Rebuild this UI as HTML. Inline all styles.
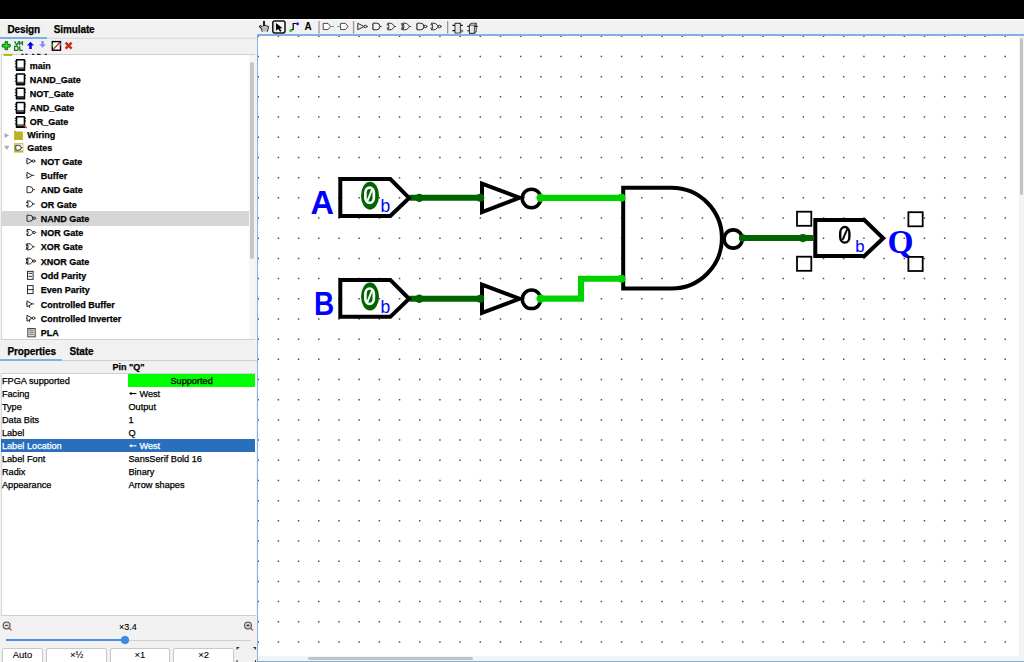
<!DOCTYPE html>
<html><head><meta charset="utf-8"><style>
html,body{margin:0;padding:0;width:1024px;height:662px;overflow:hidden;background:#fff;}
body{position:relative;font-family:"Liberation Sans", sans-serif;}
.r{position:absolute;box-sizing:border-box;}
.t{position:absolute;white-space:nowrap;font-family:"Liberation Sans", sans-serif;-webkit-text-stroke:0.25px currentColor;}
.cv{position:absolute;left:0;top:0;}
</style></head><body>
<svg class="cv" width="1024" height="662" viewBox="0 0 1024 662">
<defs><clipPath id="cc"><rect x="258" y="36" width="766" height="626"/></clipPath></defs>
<rect x="257" y="35" width="767" height="627" fill="#ffffff"/>
<g clip-path="url(#cc)">
<path d="M257.46 35.55h1.5v1.5h-1.5zM257.46 55.74h1.5v1.5h-1.5zM257.46 75.93h1.5v1.5h-1.5zM257.46 96.12h1.5v1.5h-1.5zM257.46 116.31h1.5v1.5h-1.5zM257.46 136.50h1.5v1.5h-1.5zM257.46 156.69h1.5v1.5h-1.5zM257.46 176.88h1.5v1.5h-1.5zM257.46 197.07h1.5v1.5h-1.5zM257.46 217.26h1.5v1.5h-1.5zM257.46 237.45h1.5v1.5h-1.5zM257.46 257.64h1.5v1.5h-1.5zM257.46 277.83h1.5v1.5h-1.5zM257.46 298.02h1.5v1.5h-1.5zM257.46 318.21h1.5v1.5h-1.5zM257.46 338.40h1.5v1.5h-1.5zM257.46 358.59h1.5v1.5h-1.5zM257.46 378.78h1.5v1.5h-1.5zM257.46 398.97h1.5v1.5h-1.5zM257.46 419.16h1.5v1.5h-1.5zM257.46 439.35h1.5v1.5h-1.5zM257.46 459.54h1.5v1.5h-1.5zM257.46 479.73h1.5v1.5h-1.5zM257.46 499.92h1.5v1.5h-1.5zM257.46 520.11h1.5v1.5h-1.5zM257.46 540.30h1.5v1.5h-1.5zM257.46 560.49h1.5v1.5h-1.5zM257.46 580.68h1.5v1.5h-1.5zM257.46 600.87h1.5v1.5h-1.5zM257.46 621.06h1.5v1.5h-1.5zM257.46 641.25h1.5v1.5h-1.5zM277.65 35.55h1.5v1.5h-1.5zM277.65 55.74h1.5v1.5h-1.5zM277.65 75.93h1.5v1.5h-1.5zM277.65 96.12h1.5v1.5h-1.5zM277.65 116.31h1.5v1.5h-1.5zM277.65 136.50h1.5v1.5h-1.5zM277.65 156.69h1.5v1.5h-1.5zM277.65 176.88h1.5v1.5h-1.5zM277.65 197.07h1.5v1.5h-1.5zM277.65 217.26h1.5v1.5h-1.5zM277.65 237.45h1.5v1.5h-1.5zM277.65 257.64h1.5v1.5h-1.5zM277.65 277.83h1.5v1.5h-1.5zM277.65 298.02h1.5v1.5h-1.5zM277.65 318.21h1.5v1.5h-1.5zM277.65 338.40h1.5v1.5h-1.5zM277.65 358.59h1.5v1.5h-1.5zM277.65 378.78h1.5v1.5h-1.5zM277.65 398.97h1.5v1.5h-1.5zM277.65 419.16h1.5v1.5h-1.5zM277.65 439.35h1.5v1.5h-1.5zM277.65 459.54h1.5v1.5h-1.5zM277.65 479.73h1.5v1.5h-1.5zM277.65 499.92h1.5v1.5h-1.5zM277.65 520.11h1.5v1.5h-1.5zM277.65 540.30h1.5v1.5h-1.5zM277.65 560.49h1.5v1.5h-1.5zM277.65 580.68h1.5v1.5h-1.5zM277.65 600.87h1.5v1.5h-1.5zM277.65 621.06h1.5v1.5h-1.5zM277.65 641.25h1.5v1.5h-1.5zM297.84 35.55h1.5v1.5h-1.5zM297.84 55.74h1.5v1.5h-1.5zM297.84 75.93h1.5v1.5h-1.5zM297.84 96.12h1.5v1.5h-1.5zM297.84 116.31h1.5v1.5h-1.5zM297.84 136.50h1.5v1.5h-1.5zM297.84 156.69h1.5v1.5h-1.5zM297.84 176.88h1.5v1.5h-1.5zM297.84 197.07h1.5v1.5h-1.5zM297.84 217.26h1.5v1.5h-1.5zM297.84 237.45h1.5v1.5h-1.5zM297.84 257.64h1.5v1.5h-1.5zM297.84 277.83h1.5v1.5h-1.5zM297.84 298.02h1.5v1.5h-1.5zM297.84 318.21h1.5v1.5h-1.5zM297.84 338.40h1.5v1.5h-1.5zM297.84 358.59h1.5v1.5h-1.5zM297.84 378.78h1.5v1.5h-1.5zM297.84 398.97h1.5v1.5h-1.5zM297.84 419.16h1.5v1.5h-1.5zM297.84 439.35h1.5v1.5h-1.5zM297.84 459.54h1.5v1.5h-1.5zM297.84 479.73h1.5v1.5h-1.5zM297.84 499.92h1.5v1.5h-1.5zM297.84 520.11h1.5v1.5h-1.5zM297.84 540.30h1.5v1.5h-1.5zM297.84 560.49h1.5v1.5h-1.5zM297.84 580.68h1.5v1.5h-1.5zM297.84 600.87h1.5v1.5h-1.5zM297.84 621.06h1.5v1.5h-1.5zM297.84 641.25h1.5v1.5h-1.5zM318.03 35.55h1.5v1.5h-1.5zM318.03 55.74h1.5v1.5h-1.5zM318.03 75.93h1.5v1.5h-1.5zM318.03 96.12h1.5v1.5h-1.5zM318.03 116.31h1.5v1.5h-1.5zM318.03 136.50h1.5v1.5h-1.5zM318.03 156.69h1.5v1.5h-1.5zM318.03 176.88h1.5v1.5h-1.5zM318.03 197.07h1.5v1.5h-1.5zM318.03 217.26h1.5v1.5h-1.5zM318.03 237.45h1.5v1.5h-1.5zM318.03 257.64h1.5v1.5h-1.5zM318.03 277.83h1.5v1.5h-1.5zM318.03 298.02h1.5v1.5h-1.5zM318.03 318.21h1.5v1.5h-1.5zM318.03 338.40h1.5v1.5h-1.5zM318.03 358.59h1.5v1.5h-1.5zM318.03 378.78h1.5v1.5h-1.5zM318.03 398.97h1.5v1.5h-1.5zM318.03 419.16h1.5v1.5h-1.5zM318.03 439.35h1.5v1.5h-1.5zM318.03 459.54h1.5v1.5h-1.5zM318.03 479.73h1.5v1.5h-1.5zM318.03 499.92h1.5v1.5h-1.5zM318.03 520.11h1.5v1.5h-1.5zM318.03 540.30h1.5v1.5h-1.5zM318.03 560.49h1.5v1.5h-1.5zM318.03 580.68h1.5v1.5h-1.5zM318.03 600.87h1.5v1.5h-1.5zM318.03 621.06h1.5v1.5h-1.5zM318.03 641.25h1.5v1.5h-1.5zM338.22 35.55h1.5v1.5h-1.5zM338.22 55.74h1.5v1.5h-1.5zM338.22 75.93h1.5v1.5h-1.5zM338.22 96.12h1.5v1.5h-1.5zM338.22 116.31h1.5v1.5h-1.5zM338.22 136.50h1.5v1.5h-1.5zM338.22 156.69h1.5v1.5h-1.5zM338.22 176.88h1.5v1.5h-1.5zM338.22 197.07h1.5v1.5h-1.5zM338.22 217.26h1.5v1.5h-1.5zM338.22 237.45h1.5v1.5h-1.5zM338.22 257.64h1.5v1.5h-1.5zM338.22 277.83h1.5v1.5h-1.5zM338.22 298.02h1.5v1.5h-1.5zM338.22 318.21h1.5v1.5h-1.5zM338.22 338.40h1.5v1.5h-1.5zM338.22 358.59h1.5v1.5h-1.5zM338.22 378.78h1.5v1.5h-1.5zM338.22 398.97h1.5v1.5h-1.5zM338.22 419.16h1.5v1.5h-1.5zM338.22 439.35h1.5v1.5h-1.5zM338.22 459.54h1.5v1.5h-1.5zM338.22 479.73h1.5v1.5h-1.5zM338.22 499.92h1.5v1.5h-1.5zM338.22 520.11h1.5v1.5h-1.5zM338.22 540.30h1.5v1.5h-1.5zM338.22 560.49h1.5v1.5h-1.5zM338.22 580.68h1.5v1.5h-1.5zM338.22 600.87h1.5v1.5h-1.5zM338.22 621.06h1.5v1.5h-1.5zM338.22 641.25h1.5v1.5h-1.5zM358.41 35.55h1.5v1.5h-1.5zM358.41 55.74h1.5v1.5h-1.5zM358.41 75.93h1.5v1.5h-1.5zM358.41 96.12h1.5v1.5h-1.5zM358.41 116.31h1.5v1.5h-1.5zM358.41 136.50h1.5v1.5h-1.5zM358.41 156.69h1.5v1.5h-1.5zM358.41 176.88h1.5v1.5h-1.5zM358.41 197.07h1.5v1.5h-1.5zM358.41 217.26h1.5v1.5h-1.5zM358.41 237.45h1.5v1.5h-1.5zM358.41 257.64h1.5v1.5h-1.5zM358.41 277.83h1.5v1.5h-1.5zM358.41 298.02h1.5v1.5h-1.5zM358.41 318.21h1.5v1.5h-1.5zM358.41 338.40h1.5v1.5h-1.5zM358.41 358.59h1.5v1.5h-1.5zM358.41 378.78h1.5v1.5h-1.5zM358.41 398.97h1.5v1.5h-1.5zM358.41 419.16h1.5v1.5h-1.5zM358.41 439.35h1.5v1.5h-1.5zM358.41 459.54h1.5v1.5h-1.5zM358.41 479.73h1.5v1.5h-1.5zM358.41 499.92h1.5v1.5h-1.5zM358.41 520.11h1.5v1.5h-1.5zM358.41 540.30h1.5v1.5h-1.5zM358.41 560.49h1.5v1.5h-1.5zM358.41 580.68h1.5v1.5h-1.5zM358.41 600.87h1.5v1.5h-1.5zM358.41 621.06h1.5v1.5h-1.5zM358.41 641.25h1.5v1.5h-1.5zM378.60 35.55h1.5v1.5h-1.5zM378.60 55.74h1.5v1.5h-1.5zM378.60 75.93h1.5v1.5h-1.5zM378.60 96.12h1.5v1.5h-1.5zM378.60 116.31h1.5v1.5h-1.5zM378.60 136.50h1.5v1.5h-1.5zM378.60 156.69h1.5v1.5h-1.5zM378.60 176.88h1.5v1.5h-1.5zM378.60 197.07h1.5v1.5h-1.5zM378.60 217.26h1.5v1.5h-1.5zM378.60 237.45h1.5v1.5h-1.5zM378.60 257.64h1.5v1.5h-1.5zM378.60 277.83h1.5v1.5h-1.5zM378.60 298.02h1.5v1.5h-1.5zM378.60 318.21h1.5v1.5h-1.5zM378.60 338.40h1.5v1.5h-1.5zM378.60 358.59h1.5v1.5h-1.5zM378.60 378.78h1.5v1.5h-1.5zM378.60 398.97h1.5v1.5h-1.5zM378.60 419.16h1.5v1.5h-1.5zM378.60 439.35h1.5v1.5h-1.5zM378.60 459.54h1.5v1.5h-1.5zM378.60 479.73h1.5v1.5h-1.5zM378.60 499.92h1.5v1.5h-1.5zM378.60 520.11h1.5v1.5h-1.5zM378.60 540.30h1.5v1.5h-1.5zM378.60 560.49h1.5v1.5h-1.5zM378.60 580.68h1.5v1.5h-1.5zM378.60 600.87h1.5v1.5h-1.5zM378.60 621.06h1.5v1.5h-1.5zM378.60 641.25h1.5v1.5h-1.5zM398.79 35.55h1.5v1.5h-1.5zM398.79 55.74h1.5v1.5h-1.5zM398.79 75.93h1.5v1.5h-1.5zM398.79 96.12h1.5v1.5h-1.5zM398.79 116.31h1.5v1.5h-1.5zM398.79 136.50h1.5v1.5h-1.5zM398.79 156.69h1.5v1.5h-1.5zM398.79 176.88h1.5v1.5h-1.5zM398.79 197.07h1.5v1.5h-1.5zM398.79 217.26h1.5v1.5h-1.5zM398.79 237.45h1.5v1.5h-1.5zM398.79 257.64h1.5v1.5h-1.5zM398.79 277.83h1.5v1.5h-1.5zM398.79 298.02h1.5v1.5h-1.5zM398.79 318.21h1.5v1.5h-1.5zM398.79 338.40h1.5v1.5h-1.5zM398.79 358.59h1.5v1.5h-1.5zM398.79 378.78h1.5v1.5h-1.5zM398.79 398.97h1.5v1.5h-1.5zM398.79 419.16h1.5v1.5h-1.5zM398.79 439.35h1.5v1.5h-1.5zM398.79 459.54h1.5v1.5h-1.5zM398.79 479.73h1.5v1.5h-1.5zM398.79 499.92h1.5v1.5h-1.5zM398.79 520.11h1.5v1.5h-1.5zM398.79 540.30h1.5v1.5h-1.5zM398.79 560.49h1.5v1.5h-1.5zM398.79 580.68h1.5v1.5h-1.5zM398.79 600.87h1.5v1.5h-1.5zM398.79 621.06h1.5v1.5h-1.5zM398.79 641.25h1.5v1.5h-1.5zM418.98 35.55h1.5v1.5h-1.5zM418.98 55.74h1.5v1.5h-1.5zM418.98 75.93h1.5v1.5h-1.5zM418.98 96.12h1.5v1.5h-1.5zM418.98 116.31h1.5v1.5h-1.5zM418.98 136.50h1.5v1.5h-1.5zM418.98 156.69h1.5v1.5h-1.5zM418.98 176.88h1.5v1.5h-1.5zM418.98 197.07h1.5v1.5h-1.5zM418.98 217.26h1.5v1.5h-1.5zM418.98 237.45h1.5v1.5h-1.5zM418.98 257.64h1.5v1.5h-1.5zM418.98 277.83h1.5v1.5h-1.5zM418.98 298.02h1.5v1.5h-1.5zM418.98 318.21h1.5v1.5h-1.5zM418.98 338.40h1.5v1.5h-1.5zM418.98 358.59h1.5v1.5h-1.5zM418.98 378.78h1.5v1.5h-1.5zM418.98 398.97h1.5v1.5h-1.5zM418.98 419.16h1.5v1.5h-1.5zM418.98 439.35h1.5v1.5h-1.5zM418.98 459.54h1.5v1.5h-1.5zM418.98 479.73h1.5v1.5h-1.5zM418.98 499.92h1.5v1.5h-1.5zM418.98 520.11h1.5v1.5h-1.5zM418.98 540.30h1.5v1.5h-1.5zM418.98 560.49h1.5v1.5h-1.5zM418.98 580.68h1.5v1.5h-1.5zM418.98 600.87h1.5v1.5h-1.5zM418.98 621.06h1.5v1.5h-1.5zM418.98 641.25h1.5v1.5h-1.5zM439.17 35.55h1.5v1.5h-1.5zM439.17 55.74h1.5v1.5h-1.5zM439.17 75.93h1.5v1.5h-1.5zM439.17 96.12h1.5v1.5h-1.5zM439.17 116.31h1.5v1.5h-1.5zM439.17 136.50h1.5v1.5h-1.5zM439.17 156.69h1.5v1.5h-1.5zM439.17 176.88h1.5v1.5h-1.5zM439.17 197.07h1.5v1.5h-1.5zM439.17 217.26h1.5v1.5h-1.5zM439.17 237.45h1.5v1.5h-1.5zM439.17 257.64h1.5v1.5h-1.5zM439.17 277.83h1.5v1.5h-1.5zM439.17 298.02h1.5v1.5h-1.5zM439.17 318.21h1.5v1.5h-1.5zM439.17 338.40h1.5v1.5h-1.5zM439.17 358.59h1.5v1.5h-1.5zM439.17 378.78h1.5v1.5h-1.5zM439.17 398.97h1.5v1.5h-1.5zM439.17 419.16h1.5v1.5h-1.5zM439.17 439.35h1.5v1.5h-1.5zM439.17 459.54h1.5v1.5h-1.5zM439.17 479.73h1.5v1.5h-1.5zM439.17 499.92h1.5v1.5h-1.5zM439.17 520.11h1.5v1.5h-1.5zM439.17 540.30h1.5v1.5h-1.5zM439.17 560.49h1.5v1.5h-1.5zM439.17 580.68h1.5v1.5h-1.5zM439.17 600.87h1.5v1.5h-1.5zM439.17 621.06h1.5v1.5h-1.5zM439.17 641.25h1.5v1.5h-1.5zM459.36 35.55h1.5v1.5h-1.5zM459.36 55.74h1.5v1.5h-1.5zM459.36 75.93h1.5v1.5h-1.5zM459.36 96.12h1.5v1.5h-1.5zM459.36 116.31h1.5v1.5h-1.5zM459.36 136.50h1.5v1.5h-1.5zM459.36 156.69h1.5v1.5h-1.5zM459.36 176.88h1.5v1.5h-1.5zM459.36 197.07h1.5v1.5h-1.5zM459.36 217.26h1.5v1.5h-1.5zM459.36 237.45h1.5v1.5h-1.5zM459.36 257.64h1.5v1.5h-1.5zM459.36 277.83h1.5v1.5h-1.5zM459.36 298.02h1.5v1.5h-1.5zM459.36 318.21h1.5v1.5h-1.5zM459.36 338.40h1.5v1.5h-1.5zM459.36 358.59h1.5v1.5h-1.5zM459.36 378.78h1.5v1.5h-1.5zM459.36 398.97h1.5v1.5h-1.5zM459.36 419.16h1.5v1.5h-1.5zM459.36 439.35h1.5v1.5h-1.5zM459.36 459.54h1.5v1.5h-1.5zM459.36 479.73h1.5v1.5h-1.5zM459.36 499.92h1.5v1.5h-1.5zM459.36 520.11h1.5v1.5h-1.5zM459.36 540.30h1.5v1.5h-1.5zM459.36 560.49h1.5v1.5h-1.5zM459.36 580.68h1.5v1.5h-1.5zM459.36 600.87h1.5v1.5h-1.5zM459.36 621.06h1.5v1.5h-1.5zM459.36 641.25h1.5v1.5h-1.5zM479.55 35.55h1.5v1.5h-1.5zM479.55 55.74h1.5v1.5h-1.5zM479.55 75.93h1.5v1.5h-1.5zM479.55 96.12h1.5v1.5h-1.5zM479.55 116.31h1.5v1.5h-1.5zM479.55 136.50h1.5v1.5h-1.5zM479.55 156.69h1.5v1.5h-1.5zM479.55 176.88h1.5v1.5h-1.5zM479.55 197.07h1.5v1.5h-1.5zM479.55 217.26h1.5v1.5h-1.5zM479.55 237.45h1.5v1.5h-1.5zM479.55 257.64h1.5v1.5h-1.5zM479.55 277.83h1.5v1.5h-1.5zM479.55 298.02h1.5v1.5h-1.5zM479.55 318.21h1.5v1.5h-1.5zM479.55 338.40h1.5v1.5h-1.5zM479.55 358.59h1.5v1.5h-1.5zM479.55 378.78h1.5v1.5h-1.5zM479.55 398.97h1.5v1.5h-1.5zM479.55 419.16h1.5v1.5h-1.5zM479.55 439.35h1.5v1.5h-1.5zM479.55 459.54h1.5v1.5h-1.5zM479.55 479.73h1.5v1.5h-1.5zM479.55 499.92h1.5v1.5h-1.5zM479.55 520.11h1.5v1.5h-1.5zM479.55 540.30h1.5v1.5h-1.5zM479.55 560.49h1.5v1.5h-1.5zM479.55 580.68h1.5v1.5h-1.5zM479.55 600.87h1.5v1.5h-1.5zM479.55 621.06h1.5v1.5h-1.5zM479.55 641.25h1.5v1.5h-1.5zM499.74 35.55h1.5v1.5h-1.5zM499.74 55.74h1.5v1.5h-1.5zM499.74 75.93h1.5v1.5h-1.5zM499.74 96.12h1.5v1.5h-1.5zM499.74 116.31h1.5v1.5h-1.5zM499.74 136.50h1.5v1.5h-1.5zM499.74 156.69h1.5v1.5h-1.5zM499.74 176.88h1.5v1.5h-1.5zM499.74 197.07h1.5v1.5h-1.5zM499.74 217.26h1.5v1.5h-1.5zM499.74 237.45h1.5v1.5h-1.5zM499.74 257.64h1.5v1.5h-1.5zM499.74 277.83h1.5v1.5h-1.5zM499.74 298.02h1.5v1.5h-1.5zM499.74 318.21h1.5v1.5h-1.5zM499.74 338.40h1.5v1.5h-1.5zM499.74 358.59h1.5v1.5h-1.5zM499.74 378.78h1.5v1.5h-1.5zM499.74 398.97h1.5v1.5h-1.5zM499.74 419.16h1.5v1.5h-1.5zM499.74 439.35h1.5v1.5h-1.5zM499.74 459.54h1.5v1.5h-1.5zM499.74 479.73h1.5v1.5h-1.5zM499.74 499.92h1.5v1.5h-1.5zM499.74 520.11h1.5v1.5h-1.5zM499.74 540.30h1.5v1.5h-1.5zM499.74 560.49h1.5v1.5h-1.5zM499.74 580.68h1.5v1.5h-1.5zM499.74 600.87h1.5v1.5h-1.5zM499.74 621.06h1.5v1.5h-1.5zM499.74 641.25h1.5v1.5h-1.5zM519.93 35.55h1.5v1.5h-1.5zM519.93 55.74h1.5v1.5h-1.5zM519.93 75.93h1.5v1.5h-1.5zM519.93 96.12h1.5v1.5h-1.5zM519.93 116.31h1.5v1.5h-1.5zM519.93 136.50h1.5v1.5h-1.5zM519.93 156.69h1.5v1.5h-1.5zM519.93 176.88h1.5v1.5h-1.5zM519.93 197.07h1.5v1.5h-1.5zM519.93 217.26h1.5v1.5h-1.5zM519.93 237.45h1.5v1.5h-1.5zM519.93 257.64h1.5v1.5h-1.5zM519.93 277.83h1.5v1.5h-1.5zM519.93 298.02h1.5v1.5h-1.5zM519.93 318.21h1.5v1.5h-1.5zM519.93 338.40h1.5v1.5h-1.5zM519.93 358.59h1.5v1.5h-1.5zM519.93 378.78h1.5v1.5h-1.5zM519.93 398.97h1.5v1.5h-1.5zM519.93 419.16h1.5v1.5h-1.5zM519.93 439.35h1.5v1.5h-1.5zM519.93 459.54h1.5v1.5h-1.5zM519.93 479.73h1.5v1.5h-1.5zM519.93 499.92h1.5v1.5h-1.5zM519.93 520.11h1.5v1.5h-1.5zM519.93 540.30h1.5v1.5h-1.5zM519.93 560.49h1.5v1.5h-1.5zM519.93 580.68h1.5v1.5h-1.5zM519.93 600.87h1.5v1.5h-1.5zM519.93 621.06h1.5v1.5h-1.5zM519.93 641.25h1.5v1.5h-1.5zM540.12 35.55h1.5v1.5h-1.5zM540.12 55.74h1.5v1.5h-1.5zM540.12 75.93h1.5v1.5h-1.5zM540.12 96.12h1.5v1.5h-1.5zM540.12 116.31h1.5v1.5h-1.5zM540.12 136.50h1.5v1.5h-1.5zM540.12 156.69h1.5v1.5h-1.5zM540.12 176.88h1.5v1.5h-1.5zM540.12 197.07h1.5v1.5h-1.5zM540.12 217.26h1.5v1.5h-1.5zM540.12 237.45h1.5v1.5h-1.5zM540.12 257.64h1.5v1.5h-1.5zM540.12 277.83h1.5v1.5h-1.5zM540.12 298.02h1.5v1.5h-1.5zM540.12 318.21h1.5v1.5h-1.5zM540.12 338.40h1.5v1.5h-1.5zM540.12 358.59h1.5v1.5h-1.5zM540.12 378.78h1.5v1.5h-1.5zM540.12 398.97h1.5v1.5h-1.5zM540.12 419.16h1.5v1.5h-1.5zM540.12 439.35h1.5v1.5h-1.5zM540.12 459.54h1.5v1.5h-1.5zM540.12 479.73h1.5v1.5h-1.5zM540.12 499.92h1.5v1.5h-1.5zM540.12 520.11h1.5v1.5h-1.5zM540.12 540.30h1.5v1.5h-1.5zM540.12 560.49h1.5v1.5h-1.5zM540.12 580.68h1.5v1.5h-1.5zM540.12 600.87h1.5v1.5h-1.5zM540.12 621.06h1.5v1.5h-1.5zM540.12 641.25h1.5v1.5h-1.5zM560.31 35.55h1.5v1.5h-1.5zM560.31 55.74h1.5v1.5h-1.5zM560.31 75.93h1.5v1.5h-1.5zM560.31 96.12h1.5v1.5h-1.5zM560.31 116.31h1.5v1.5h-1.5zM560.31 136.50h1.5v1.5h-1.5zM560.31 156.69h1.5v1.5h-1.5zM560.31 176.88h1.5v1.5h-1.5zM560.31 197.07h1.5v1.5h-1.5zM560.31 217.26h1.5v1.5h-1.5zM560.31 237.45h1.5v1.5h-1.5zM560.31 257.64h1.5v1.5h-1.5zM560.31 277.83h1.5v1.5h-1.5zM560.31 298.02h1.5v1.5h-1.5zM560.31 318.21h1.5v1.5h-1.5zM560.31 338.40h1.5v1.5h-1.5zM560.31 358.59h1.5v1.5h-1.5zM560.31 378.78h1.5v1.5h-1.5zM560.31 398.97h1.5v1.5h-1.5zM560.31 419.16h1.5v1.5h-1.5zM560.31 439.35h1.5v1.5h-1.5zM560.31 459.54h1.5v1.5h-1.5zM560.31 479.73h1.5v1.5h-1.5zM560.31 499.92h1.5v1.5h-1.5zM560.31 520.11h1.5v1.5h-1.5zM560.31 540.30h1.5v1.5h-1.5zM560.31 560.49h1.5v1.5h-1.5zM560.31 580.68h1.5v1.5h-1.5zM560.31 600.87h1.5v1.5h-1.5zM560.31 621.06h1.5v1.5h-1.5zM560.31 641.25h1.5v1.5h-1.5zM580.50 35.55h1.5v1.5h-1.5zM580.50 55.74h1.5v1.5h-1.5zM580.50 75.93h1.5v1.5h-1.5zM580.50 96.12h1.5v1.5h-1.5zM580.50 116.31h1.5v1.5h-1.5zM580.50 136.50h1.5v1.5h-1.5zM580.50 156.69h1.5v1.5h-1.5zM580.50 176.88h1.5v1.5h-1.5zM580.50 197.07h1.5v1.5h-1.5zM580.50 217.26h1.5v1.5h-1.5zM580.50 237.45h1.5v1.5h-1.5zM580.50 257.64h1.5v1.5h-1.5zM580.50 277.83h1.5v1.5h-1.5zM580.50 298.02h1.5v1.5h-1.5zM580.50 318.21h1.5v1.5h-1.5zM580.50 338.40h1.5v1.5h-1.5zM580.50 358.59h1.5v1.5h-1.5zM580.50 378.78h1.5v1.5h-1.5zM580.50 398.97h1.5v1.5h-1.5zM580.50 419.16h1.5v1.5h-1.5zM580.50 439.35h1.5v1.5h-1.5zM580.50 459.54h1.5v1.5h-1.5zM580.50 479.73h1.5v1.5h-1.5zM580.50 499.92h1.5v1.5h-1.5zM580.50 520.11h1.5v1.5h-1.5zM580.50 540.30h1.5v1.5h-1.5zM580.50 560.49h1.5v1.5h-1.5zM580.50 580.68h1.5v1.5h-1.5zM580.50 600.87h1.5v1.5h-1.5zM580.50 621.06h1.5v1.5h-1.5zM580.50 641.25h1.5v1.5h-1.5zM600.69 35.55h1.5v1.5h-1.5zM600.69 55.74h1.5v1.5h-1.5zM600.69 75.93h1.5v1.5h-1.5zM600.69 96.12h1.5v1.5h-1.5zM600.69 116.31h1.5v1.5h-1.5zM600.69 136.50h1.5v1.5h-1.5zM600.69 156.69h1.5v1.5h-1.5zM600.69 176.88h1.5v1.5h-1.5zM600.69 197.07h1.5v1.5h-1.5zM600.69 217.26h1.5v1.5h-1.5zM600.69 237.45h1.5v1.5h-1.5zM600.69 257.64h1.5v1.5h-1.5zM600.69 277.83h1.5v1.5h-1.5zM600.69 298.02h1.5v1.5h-1.5zM600.69 318.21h1.5v1.5h-1.5zM600.69 338.40h1.5v1.5h-1.5zM600.69 358.59h1.5v1.5h-1.5zM600.69 378.78h1.5v1.5h-1.5zM600.69 398.97h1.5v1.5h-1.5zM600.69 419.16h1.5v1.5h-1.5zM600.69 439.35h1.5v1.5h-1.5zM600.69 459.54h1.5v1.5h-1.5zM600.69 479.73h1.5v1.5h-1.5zM600.69 499.92h1.5v1.5h-1.5zM600.69 520.11h1.5v1.5h-1.5zM600.69 540.30h1.5v1.5h-1.5zM600.69 560.49h1.5v1.5h-1.5zM600.69 580.68h1.5v1.5h-1.5zM600.69 600.87h1.5v1.5h-1.5zM600.69 621.06h1.5v1.5h-1.5zM600.69 641.25h1.5v1.5h-1.5zM620.88 35.55h1.5v1.5h-1.5zM620.88 55.74h1.5v1.5h-1.5zM620.88 75.93h1.5v1.5h-1.5zM620.88 96.12h1.5v1.5h-1.5zM620.88 116.31h1.5v1.5h-1.5zM620.88 136.50h1.5v1.5h-1.5zM620.88 156.69h1.5v1.5h-1.5zM620.88 176.88h1.5v1.5h-1.5zM620.88 197.07h1.5v1.5h-1.5zM620.88 217.26h1.5v1.5h-1.5zM620.88 237.45h1.5v1.5h-1.5zM620.88 257.64h1.5v1.5h-1.5zM620.88 277.83h1.5v1.5h-1.5zM620.88 298.02h1.5v1.5h-1.5zM620.88 318.21h1.5v1.5h-1.5zM620.88 338.40h1.5v1.5h-1.5zM620.88 358.59h1.5v1.5h-1.5zM620.88 378.78h1.5v1.5h-1.5zM620.88 398.97h1.5v1.5h-1.5zM620.88 419.16h1.5v1.5h-1.5zM620.88 439.35h1.5v1.5h-1.5zM620.88 459.54h1.5v1.5h-1.5zM620.88 479.73h1.5v1.5h-1.5zM620.88 499.92h1.5v1.5h-1.5zM620.88 520.11h1.5v1.5h-1.5zM620.88 540.30h1.5v1.5h-1.5zM620.88 560.49h1.5v1.5h-1.5zM620.88 580.68h1.5v1.5h-1.5zM620.88 600.87h1.5v1.5h-1.5zM620.88 621.06h1.5v1.5h-1.5zM620.88 641.25h1.5v1.5h-1.5zM641.07 35.55h1.5v1.5h-1.5zM641.07 55.74h1.5v1.5h-1.5zM641.07 75.93h1.5v1.5h-1.5zM641.07 96.12h1.5v1.5h-1.5zM641.07 116.31h1.5v1.5h-1.5zM641.07 136.50h1.5v1.5h-1.5zM641.07 156.69h1.5v1.5h-1.5zM641.07 176.88h1.5v1.5h-1.5zM641.07 197.07h1.5v1.5h-1.5zM641.07 217.26h1.5v1.5h-1.5zM641.07 237.45h1.5v1.5h-1.5zM641.07 257.64h1.5v1.5h-1.5zM641.07 277.83h1.5v1.5h-1.5zM641.07 298.02h1.5v1.5h-1.5zM641.07 318.21h1.5v1.5h-1.5zM641.07 338.40h1.5v1.5h-1.5zM641.07 358.59h1.5v1.5h-1.5zM641.07 378.78h1.5v1.5h-1.5zM641.07 398.97h1.5v1.5h-1.5zM641.07 419.16h1.5v1.5h-1.5zM641.07 439.35h1.5v1.5h-1.5zM641.07 459.54h1.5v1.5h-1.5zM641.07 479.73h1.5v1.5h-1.5zM641.07 499.92h1.5v1.5h-1.5zM641.07 520.11h1.5v1.5h-1.5zM641.07 540.30h1.5v1.5h-1.5zM641.07 560.49h1.5v1.5h-1.5zM641.07 580.68h1.5v1.5h-1.5zM641.07 600.87h1.5v1.5h-1.5zM641.07 621.06h1.5v1.5h-1.5zM641.07 641.25h1.5v1.5h-1.5zM661.26 35.55h1.5v1.5h-1.5zM661.26 55.74h1.5v1.5h-1.5zM661.26 75.93h1.5v1.5h-1.5zM661.26 96.12h1.5v1.5h-1.5zM661.26 116.31h1.5v1.5h-1.5zM661.26 136.50h1.5v1.5h-1.5zM661.26 156.69h1.5v1.5h-1.5zM661.26 176.88h1.5v1.5h-1.5zM661.26 197.07h1.5v1.5h-1.5zM661.26 217.26h1.5v1.5h-1.5zM661.26 237.45h1.5v1.5h-1.5zM661.26 257.64h1.5v1.5h-1.5zM661.26 277.83h1.5v1.5h-1.5zM661.26 298.02h1.5v1.5h-1.5zM661.26 318.21h1.5v1.5h-1.5zM661.26 338.40h1.5v1.5h-1.5zM661.26 358.59h1.5v1.5h-1.5zM661.26 378.78h1.5v1.5h-1.5zM661.26 398.97h1.5v1.5h-1.5zM661.26 419.16h1.5v1.5h-1.5zM661.26 439.35h1.5v1.5h-1.5zM661.26 459.54h1.5v1.5h-1.5zM661.26 479.73h1.5v1.5h-1.5zM661.26 499.92h1.5v1.5h-1.5zM661.26 520.11h1.5v1.5h-1.5zM661.26 540.30h1.5v1.5h-1.5zM661.26 560.49h1.5v1.5h-1.5zM661.26 580.68h1.5v1.5h-1.5zM661.26 600.87h1.5v1.5h-1.5zM661.26 621.06h1.5v1.5h-1.5zM661.26 641.25h1.5v1.5h-1.5zM681.45 35.55h1.5v1.5h-1.5zM681.45 55.74h1.5v1.5h-1.5zM681.45 75.93h1.5v1.5h-1.5zM681.45 96.12h1.5v1.5h-1.5zM681.45 116.31h1.5v1.5h-1.5zM681.45 136.50h1.5v1.5h-1.5zM681.45 156.69h1.5v1.5h-1.5zM681.45 176.88h1.5v1.5h-1.5zM681.45 197.07h1.5v1.5h-1.5zM681.45 217.26h1.5v1.5h-1.5zM681.45 237.45h1.5v1.5h-1.5zM681.45 257.64h1.5v1.5h-1.5zM681.45 277.83h1.5v1.5h-1.5zM681.45 298.02h1.5v1.5h-1.5zM681.45 318.21h1.5v1.5h-1.5zM681.45 338.40h1.5v1.5h-1.5zM681.45 358.59h1.5v1.5h-1.5zM681.45 378.78h1.5v1.5h-1.5zM681.45 398.97h1.5v1.5h-1.5zM681.45 419.16h1.5v1.5h-1.5zM681.45 439.35h1.5v1.5h-1.5zM681.45 459.54h1.5v1.5h-1.5zM681.45 479.73h1.5v1.5h-1.5zM681.45 499.92h1.5v1.5h-1.5zM681.45 520.11h1.5v1.5h-1.5zM681.45 540.30h1.5v1.5h-1.5zM681.45 560.49h1.5v1.5h-1.5zM681.45 580.68h1.5v1.5h-1.5zM681.45 600.87h1.5v1.5h-1.5zM681.45 621.06h1.5v1.5h-1.5zM681.45 641.25h1.5v1.5h-1.5zM701.64 35.55h1.5v1.5h-1.5zM701.64 55.74h1.5v1.5h-1.5zM701.64 75.93h1.5v1.5h-1.5zM701.64 96.12h1.5v1.5h-1.5zM701.64 116.31h1.5v1.5h-1.5zM701.64 136.50h1.5v1.5h-1.5zM701.64 156.69h1.5v1.5h-1.5zM701.64 176.88h1.5v1.5h-1.5zM701.64 197.07h1.5v1.5h-1.5zM701.64 217.26h1.5v1.5h-1.5zM701.64 237.45h1.5v1.5h-1.5zM701.64 257.64h1.5v1.5h-1.5zM701.64 277.83h1.5v1.5h-1.5zM701.64 298.02h1.5v1.5h-1.5zM701.64 318.21h1.5v1.5h-1.5zM701.64 338.40h1.5v1.5h-1.5zM701.64 358.59h1.5v1.5h-1.5zM701.64 378.78h1.5v1.5h-1.5zM701.64 398.97h1.5v1.5h-1.5zM701.64 419.16h1.5v1.5h-1.5zM701.64 439.35h1.5v1.5h-1.5zM701.64 459.54h1.5v1.5h-1.5zM701.64 479.73h1.5v1.5h-1.5zM701.64 499.92h1.5v1.5h-1.5zM701.64 520.11h1.5v1.5h-1.5zM701.64 540.30h1.5v1.5h-1.5zM701.64 560.49h1.5v1.5h-1.5zM701.64 580.68h1.5v1.5h-1.5zM701.64 600.87h1.5v1.5h-1.5zM701.64 621.06h1.5v1.5h-1.5zM701.64 641.25h1.5v1.5h-1.5zM721.83 35.55h1.5v1.5h-1.5zM721.83 55.74h1.5v1.5h-1.5zM721.83 75.93h1.5v1.5h-1.5zM721.83 96.12h1.5v1.5h-1.5zM721.83 116.31h1.5v1.5h-1.5zM721.83 136.50h1.5v1.5h-1.5zM721.83 156.69h1.5v1.5h-1.5zM721.83 176.88h1.5v1.5h-1.5zM721.83 197.07h1.5v1.5h-1.5zM721.83 217.26h1.5v1.5h-1.5zM721.83 237.45h1.5v1.5h-1.5zM721.83 257.64h1.5v1.5h-1.5zM721.83 277.83h1.5v1.5h-1.5zM721.83 298.02h1.5v1.5h-1.5zM721.83 318.21h1.5v1.5h-1.5zM721.83 338.40h1.5v1.5h-1.5zM721.83 358.59h1.5v1.5h-1.5zM721.83 378.78h1.5v1.5h-1.5zM721.83 398.97h1.5v1.5h-1.5zM721.83 419.16h1.5v1.5h-1.5zM721.83 439.35h1.5v1.5h-1.5zM721.83 459.54h1.5v1.5h-1.5zM721.83 479.73h1.5v1.5h-1.5zM721.83 499.92h1.5v1.5h-1.5zM721.83 520.11h1.5v1.5h-1.5zM721.83 540.30h1.5v1.5h-1.5zM721.83 560.49h1.5v1.5h-1.5zM721.83 580.68h1.5v1.5h-1.5zM721.83 600.87h1.5v1.5h-1.5zM721.83 621.06h1.5v1.5h-1.5zM721.83 641.25h1.5v1.5h-1.5zM742.02 35.55h1.5v1.5h-1.5zM742.02 55.74h1.5v1.5h-1.5zM742.02 75.93h1.5v1.5h-1.5zM742.02 96.12h1.5v1.5h-1.5zM742.02 116.31h1.5v1.5h-1.5zM742.02 136.50h1.5v1.5h-1.5zM742.02 156.69h1.5v1.5h-1.5zM742.02 176.88h1.5v1.5h-1.5zM742.02 197.07h1.5v1.5h-1.5zM742.02 217.26h1.5v1.5h-1.5zM742.02 237.45h1.5v1.5h-1.5zM742.02 257.64h1.5v1.5h-1.5zM742.02 277.83h1.5v1.5h-1.5zM742.02 298.02h1.5v1.5h-1.5zM742.02 318.21h1.5v1.5h-1.5zM742.02 338.40h1.5v1.5h-1.5zM742.02 358.59h1.5v1.5h-1.5zM742.02 378.78h1.5v1.5h-1.5zM742.02 398.97h1.5v1.5h-1.5zM742.02 419.16h1.5v1.5h-1.5zM742.02 439.35h1.5v1.5h-1.5zM742.02 459.54h1.5v1.5h-1.5zM742.02 479.73h1.5v1.5h-1.5zM742.02 499.92h1.5v1.5h-1.5zM742.02 520.11h1.5v1.5h-1.5zM742.02 540.30h1.5v1.5h-1.5zM742.02 560.49h1.5v1.5h-1.5zM742.02 580.68h1.5v1.5h-1.5zM742.02 600.87h1.5v1.5h-1.5zM742.02 621.06h1.5v1.5h-1.5zM742.02 641.25h1.5v1.5h-1.5zM762.21 35.55h1.5v1.5h-1.5zM762.21 55.74h1.5v1.5h-1.5zM762.21 75.93h1.5v1.5h-1.5zM762.21 96.12h1.5v1.5h-1.5zM762.21 116.31h1.5v1.5h-1.5zM762.21 136.50h1.5v1.5h-1.5zM762.21 156.69h1.5v1.5h-1.5zM762.21 176.88h1.5v1.5h-1.5zM762.21 197.07h1.5v1.5h-1.5zM762.21 217.26h1.5v1.5h-1.5zM762.21 237.45h1.5v1.5h-1.5zM762.21 257.64h1.5v1.5h-1.5zM762.21 277.83h1.5v1.5h-1.5zM762.21 298.02h1.5v1.5h-1.5zM762.21 318.21h1.5v1.5h-1.5zM762.21 338.40h1.5v1.5h-1.5zM762.21 358.59h1.5v1.5h-1.5zM762.21 378.78h1.5v1.5h-1.5zM762.21 398.97h1.5v1.5h-1.5zM762.21 419.16h1.5v1.5h-1.5zM762.21 439.35h1.5v1.5h-1.5zM762.21 459.54h1.5v1.5h-1.5zM762.21 479.73h1.5v1.5h-1.5zM762.21 499.92h1.5v1.5h-1.5zM762.21 520.11h1.5v1.5h-1.5zM762.21 540.30h1.5v1.5h-1.5zM762.21 560.49h1.5v1.5h-1.5zM762.21 580.68h1.5v1.5h-1.5zM762.21 600.87h1.5v1.5h-1.5zM762.21 621.06h1.5v1.5h-1.5zM762.21 641.25h1.5v1.5h-1.5zM782.40 35.55h1.5v1.5h-1.5zM782.40 55.74h1.5v1.5h-1.5zM782.40 75.93h1.5v1.5h-1.5zM782.40 96.12h1.5v1.5h-1.5zM782.40 116.31h1.5v1.5h-1.5zM782.40 136.50h1.5v1.5h-1.5zM782.40 156.69h1.5v1.5h-1.5zM782.40 176.88h1.5v1.5h-1.5zM782.40 197.07h1.5v1.5h-1.5zM782.40 217.26h1.5v1.5h-1.5zM782.40 237.45h1.5v1.5h-1.5zM782.40 257.64h1.5v1.5h-1.5zM782.40 277.83h1.5v1.5h-1.5zM782.40 298.02h1.5v1.5h-1.5zM782.40 318.21h1.5v1.5h-1.5zM782.40 338.40h1.5v1.5h-1.5zM782.40 358.59h1.5v1.5h-1.5zM782.40 378.78h1.5v1.5h-1.5zM782.40 398.97h1.5v1.5h-1.5zM782.40 419.16h1.5v1.5h-1.5zM782.40 439.35h1.5v1.5h-1.5zM782.40 459.54h1.5v1.5h-1.5zM782.40 479.73h1.5v1.5h-1.5zM782.40 499.92h1.5v1.5h-1.5zM782.40 520.11h1.5v1.5h-1.5zM782.40 540.30h1.5v1.5h-1.5zM782.40 560.49h1.5v1.5h-1.5zM782.40 580.68h1.5v1.5h-1.5zM782.40 600.87h1.5v1.5h-1.5zM782.40 621.06h1.5v1.5h-1.5zM782.40 641.25h1.5v1.5h-1.5zM802.59 35.55h1.5v1.5h-1.5zM802.59 55.74h1.5v1.5h-1.5zM802.59 75.93h1.5v1.5h-1.5zM802.59 96.12h1.5v1.5h-1.5zM802.59 116.31h1.5v1.5h-1.5zM802.59 136.50h1.5v1.5h-1.5zM802.59 156.69h1.5v1.5h-1.5zM802.59 176.88h1.5v1.5h-1.5zM802.59 197.07h1.5v1.5h-1.5zM802.59 217.26h1.5v1.5h-1.5zM802.59 237.45h1.5v1.5h-1.5zM802.59 257.64h1.5v1.5h-1.5zM802.59 277.83h1.5v1.5h-1.5zM802.59 298.02h1.5v1.5h-1.5zM802.59 318.21h1.5v1.5h-1.5zM802.59 338.40h1.5v1.5h-1.5zM802.59 358.59h1.5v1.5h-1.5zM802.59 378.78h1.5v1.5h-1.5zM802.59 398.97h1.5v1.5h-1.5zM802.59 419.16h1.5v1.5h-1.5zM802.59 439.35h1.5v1.5h-1.5zM802.59 459.54h1.5v1.5h-1.5zM802.59 479.73h1.5v1.5h-1.5zM802.59 499.92h1.5v1.5h-1.5zM802.59 520.11h1.5v1.5h-1.5zM802.59 540.30h1.5v1.5h-1.5zM802.59 560.49h1.5v1.5h-1.5zM802.59 580.68h1.5v1.5h-1.5zM802.59 600.87h1.5v1.5h-1.5zM802.59 621.06h1.5v1.5h-1.5zM802.59 641.25h1.5v1.5h-1.5zM822.78 35.55h1.5v1.5h-1.5zM822.78 55.74h1.5v1.5h-1.5zM822.78 75.93h1.5v1.5h-1.5zM822.78 96.12h1.5v1.5h-1.5zM822.78 116.31h1.5v1.5h-1.5zM822.78 136.50h1.5v1.5h-1.5zM822.78 156.69h1.5v1.5h-1.5zM822.78 176.88h1.5v1.5h-1.5zM822.78 197.07h1.5v1.5h-1.5zM822.78 217.26h1.5v1.5h-1.5zM822.78 237.45h1.5v1.5h-1.5zM822.78 257.64h1.5v1.5h-1.5zM822.78 277.83h1.5v1.5h-1.5zM822.78 298.02h1.5v1.5h-1.5zM822.78 318.21h1.5v1.5h-1.5zM822.78 338.40h1.5v1.5h-1.5zM822.78 358.59h1.5v1.5h-1.5zM822.78 378.78h1.5v1.5h-1.5zM822.78 398.97h1.5v1.5h-1.5zM822.78 419.16h1.5v1.5h-1.5zM822.78 439.35h1.5v1.5h-1.5zM822.78 459.54h1.5v1.5h-1.5zM822.78 479.73h1.5v1.5h-1.5zM822.78 499.92h1.5v1.5h-1.5zM822.78 520.11h1.5v1.5h-1.5zM822.78 540.30h1.5v1.5h-1.5zM822.78 560.49h1.5v1.5h-1.5zM822.78 580.68h1.5v1.5h-1.5zM822.78 600.87h1.5v1.5h-1.5zM822.78 621.06h1.5v1.5h-1.5zM822.78 641.25h1.5v1.5h-1.5zM842.97 35.55h1.5v1.5h-1.5zM842.97 55.74h1.5v1.5h-1.5zM842.97 75.93h1.5v1.5h-1.5zM842.97 96.12h1.5v1.5h-1.5zM842.97 116.31h1.5v1.5h-1.5zM842.97 136.50h1.5v1.5h-1.5zM842.97 156.69h1.5v1.5h-1.5zM842.97 176.88h1.5v1.5h-1.5zM842.97 197.07h1.5v1.5h-1.5zM842.97 217.26h1.5v1.5h-1.5zM842.97 237.45h1.5v1.5h-1.5zM842.97 257.64h1.5v1.5h-1.5zM842.97 277.83h1.5v1.5h-1.5zM842.97 298.02h1.5v1.5h-1.5zM842.97 318.21h1.5v1.5h-1.5zM842.97 338.40h1.5v1.5h-1.5zM842.97 358.59h1.5v1.5h-1.5zM842.97 378.78h1.5v1.5h-1.5zM842.97 398.97h1.5v1.5h-1.5zM842.97 419.16h1.5v1.5h-1.5zM842.97 439.35h1.5v1.5h-1.5zM842.97 459.54h1.5v1.5h-1.5zM842.97 479.73h1.5v1.5h-1.5zM842.97 499.92h1.5v1.5h-1.5zM842.97 520.11h1.5v1.5h-1.5zM842.97 540.30h1.5v1.5h-1.5zM842.97 560.49h1.5v1.5h-1.5zM842.97 580.68h1.5v1.5h-1.5zM842.97 600.87h1.5v1.5h-1.5zM842.97 621.06h1.5v1.5h-1.5zM842.97 641.25h1.5v1.5h-1.5zM863.16 35.55h1.5v1.5h-1.5zM863.16 55.74h1.5v1.5h-1.5zM863.16 75.93h1.5v1.5h-1.5zM863.16 96.12h1.5v1.5h-1.5zM863.16 116.31h1.5v1.5h-1.5zM863.16 136.50h1.5v1.5h-1.5zM863.16 156.69h1.5v1.5h-1.5zM863.16 176.88h1.5v1.5h-1.5zM863.16 197.07h1.5v1.5h-1.5zM863.16 217.26h1.5v1.5h-1.5zM863.16 237.45h1.5v1.5h-1.5zM863.16 257.64h1.5v1.5h-1.5zM863.16 277.83h1.5v1.5h-1.5zM863.16 298.02h1.5v1.5h-1.5zM863.16 318.21h1.5v1.5h-1.5zM863.16 338.40h1.5v1.5h-1.5zM863.16 358.59h1.5v1.5h-1.5zM863.16 378.78h1.5v1.5h-1.5zM863.16 398.97h1.5v1.5h-1.5zM863.16 419.16h1.5v1.5h-1.5zM863.16 439.35h1.5v1.5h-1.5zM863.16 459.54h1.5v1.5h-1.5zM863.16 479.73h1.5v1.5h-1.5zM863.16 499.92h1.5v1.5h-1.5zM863.16 520.11h1.5v1.5h-1.5zM863.16 540.30h1.5v1.5h-1.5zM863.16 560.49h1.5v1.5h-1.5zM863.16 580.68h1.5v1.5h-1.5zM863.16 600.87h1.5v1.5h-1.5zM863.16 621.06h1.5v1.5h-1.5zM863.16 641.25h1.5v1.5h-1.5zM883.35 35.55h1.5v1.5h-1.5zM883.35 55.74h1.5v1.5h-1.5zM883.35 75.93h1.5v1.5h-1.5zM883.35 96.12h1.5v1.5h-1.5zM883.35 116.31h1.5v1.5h-1.5zM883.35 136.50h1.5v1.5h-1.5zM883.35 156.69h1.5v1.5h-1.5zM883.35 176.88h1.5v1.5h-1.5zM883.35 197.07h1.5v1.5h-1.5zM883.35 217.26h1.5v1.5h-1.5zM883.35 237.45h1.5v1.5h-1.5zM883.35 257.64h1.5v1.5h-1.5zM883.35 277.83h1.5v1.5h-1.5zM883.35 298.02h1.5v1.5h-1.5zM883.35 318.21h1.5v1.5h-1.5zM883.35 338.40h1.5v1.5h-1.5zM883.35 358.59h1.5v1.5h-1.5zM883.35 378.78h1.5v1.5h-1.5zM883.35 398.97h1.5v1.5h-1.5zM883.35 419.16h1.5v1.5h-1.5zM883.35 439.35h1.5v1.5h-1.5zM883.35 459.54h1.5v1.5h-1.5zM883.35 479.73h1.5v1.5h-1.5zM883.35 499.92h1.5v1.5h-1.5zM883.35 520.11h1.5v1.5h-1.5zM883.35 540.30h1.5v1.5h-1.5zM883.35 560.49h1.5v1.5h-1.5zM883.35 580.68h1.5v1.5h-1.5zM883.35 600.87h1.5v1.5h-1.5zM883.35 621.06h1.5v1.5h-1.5zM883.35 641.25h1.5v1.5h-1.5zM903.54 35.55h1.5v1.5h-1.5zM903.54 55.74h1.5v1.5h-1.5zM903.54 75.93h1.5v1.5h-1.5zM903.54 96.12h1.5v1.5h-1.5zM903.54 116.31h1.5v1.5h-1.5zM903.54 136.50h1.5v1.5h-1.5zM903.54 156.69h1.5v1.5h-1.5zM903.54 176.88h1.5v1.5h-1.5zM903.54 197.07h1.5v1.5h-1.5zM903.54 217.26h1.5v1.5h-1.5zM903.54 237.45h1.5v1.5h-1.5zM903.54 257.64h1.5v1.5h-1.5zM903.54 277.83h1.5v1.5h-1.5zM903.54 298.02h1.5v1.5h-1.5zM903.54 318.21h1.5v1.5h-1.5zM903.54 338.40h1.5v1.5h-1.5zM903.54 358.59h1.5v1.5h-1.5zM903.54 378.78h1.5v1.5h-1.5zM903.54 398.97h1.5v1.5h-1.5zM903.54 419.16h1.5v1.5h-1.5zM903.54 439.35h1.5v1.5h-1.5zM903.54 459.54h1.5v1.5h-1.5zM903.54 479.73h1.5v1.5h-1.5zM903.54 499.92h1.5v1.5h-1.5zM903.54 520.11h1.5v1.5h-1.5zM903.54 540.30h1.5v1.5h-1.5zM903.54 560.49h1.5v1.5h-1.5zM903.54 580.68h1.5v1.5h-1.5zM903.54 600.87h1.5v1.5h-1.5zM903.54 621.06h1.5v1.5h-1.5zM903.54 641.25h1.5v1.5h-1.5zM923.73 35.55h1.5v1.5h-1.5zM923.73 55.74h1.5v1.5h-1.5zM923.73 75.93h1.5v1.5h-1.5zM923.73 96.12h1.5v1.5h-1.5zM923.73 116.31h1.5v1.5h-1.5zM923.73 136.50h1.5v1.5h-1.5zM923.73 156.69h1.5v1.5h-1.5zM923.73 176.88h1.5v1.5h-1.5zM923.73 197.07h1.5v1.5h-1.5zM923.73 217.26h1.5v1.5h-1.5zM923.73 237.45h1.5v1.5h-1.5zM923.73 257.64h1.5v1.5h-1.5zM923.73 277.83h1.5v1.5h-1.5zM923.73 298.02h1.5v1.5h-1.5zM923.73 318.21h1.5v1.5h-1.5zM923.73 338.40h1.5v1.5h-1.5zM923.73 358.59h1.5v1.5h-1.5zM923.73 378.78h1.5v1.5h-1.5zM923.73 398.97h1.5v1.5h-1.5zM923.73 419.16h1.5v1.5h-1.5zM923.73 439.35h1.5v1.5h-1.5zM923.73 459.54h1.5v1.5h-1.5zM923.73 479.73h1.5v1.5h-1.5zM923.73 499.92h1.5v1.5h-1.5zM923.73 520.11h1.5v1.5h-1.5zM923.73 540.30h1.5v1.5h-1.5zM923.73 560.49h1.5v1.5h-1.5zM923.73 580.68h1.5v1.5h-1.5zM923.73 600.87h1.5v1.5h-1.5zM923.73 621.06h1.5v1.5h-1.5zM923.73 641.25h1.5v1.5h-1.5zM943.92 35.55h1.5v1.5h-1.5zM943.92 55.74h1.5v1.5h-1.5zM943.92 75.93h1.5v1.5h-1.5zM943.92 96.12h1.5v1.5h-1.5zM943.92 116.31h1.5v1.5h-1.5zM943.92 136.50h1.5v1.5h-1.5zM943.92 156.69h1.5v1.5h-1.5zM943.92 176.88h1.5v1.5h-1.5zM943.92 197.07h1.5v1.5h-1.5zM943.92 217.26h1.5v1.5h-1.5zM943.92 237.45h1.5v1.5h-1.5zM943.92 257.64h1.5v1.5h-1.5zM943.92 277.83h1.5v1.5h-1.5zM943.92 298.02h1.5v1.5h-1.5zM943.92 318.21h1.5v1.5h-1.5zM943.92 338.40h1.5v1.5h-1.5zM943.92 358.59h1.5v1.5h-1.5zM943.92 378.78h1.5v1.5h-1.5zM943.92 398.97h1.5v1.5h-1.5zM943.92 419.16h1.5v1.5h-1.5zM943.92 439.35h1.5v1.5h-1.5zM943.92 459.54h1.5v1.5h-1.5zM943.92 479.73h1.5v1.5h-1.5zM943.92 499.92h1.5v1.5h-1.5zM943.92 520.11h1.5v1.5h-1.5zM943.92 540.30h1.5v1.5h-1.5zM943.92 560.49h1.5v1.5h-1.5zM943.92 580.68h1.5v1.5h-1.5zM943.92 600.87h1.5v1.5h-1.5zM943.92 621.06h1.5v1.5h-1.5zM943.92 641.25h1.5v1.5h-1.5zM964.11 35.55h1.5v1.5h-1.5zM964.11 55.74h1.5v1.5h-1.5zM964.11 75.93h1.5v1.5h-1.5zM964.11 96.12h1.5v1.5h-1.5zM964.11 116.31h1.5v1.5h-1.5zM964.11 136.50h1.5v1.5h-1.5zM964.11 156.69h1.5v1.5h-1.5zM964.11 176.88h1.5v1.5h-1.5zM964.11 197.07h1.5v1.5h-1.5zM964.11 217.26h1.5v1.5h-1.5zM964.11 237.45h1.5v1.5h-1.5zM964.11 257.64h1.5v1.5h-1.5zM964.11 277.83h1.5v1.5h-1.5zM964.11 298.02h1.5v1.5h-1.5zM964.11 318.21h1.5v1.5h-1.5zM964.11 338.40h1.5v1.5h-1.5zM964.11 358.59h1.5v1.5h-1.5zM964.11 378.78h1.5v1.5h-1.5zM964.11 398.97h1.5v1.5h-1.5zM964.11 419.16h1.5v1.5h-1.5zM964.11 439.35h1.5v1.5h-1.5zM964.11 459.54h1.5v1.5h-1.5zM964.11 479.73h1.5v1.5h-1.5zM964.11 499.92h1.5v1.5h-1.5zM964.11 520.11h1.5v1.5h-1.5zM964.11 540.30h1.5v1.5h-1.5zM964.11 560.49h1.5v1.5h-1.5zM964.11 580.68h1.5v1.5h-1.5zM964.11 600.87h1.5v1.5h-1.5zM964.11 621.06h1.5v1.5h-1.5zM964.11 641.25h1.5v1.5h-1.5zM984.30 35.55h1.5v1.5h-1.5zM984.30 55.74h1.5v1.5h-1.5zM984.30 75.93h1.5v1.5h-1.5zM984.30 96.12h1.5v1.5h-1.5zM984.30 116.31h1.5v1.5h-1.5zM984.30 136.50h1.5v1.5h-1.5zM984.30 156.69h1.5v1.5h-1.5zM984.30 176.88h1.5v1.5h-1.5zM984.30 197.07h1.5v1.5h-1.5zM984.30 217.26h1.5v1.5h-1.5zM984.30 237.45h1.5v1.5h-1.5zM984.30 257.64h1.5v1.5h-1.5zM984.30 277.83h1.5v1.5h-1.5zM984.30 298.02h1.5v1.5h-1.5zM984.30 318.21h1.5v1.5h-1.5zM984.30 338.40h1.5v1.5h-1.5zM984.30 358.59h1.5v1.5h-1.5zM984.30 378.78h1.5v1.5h-1.5zM984.30 398.97h1.5v1.5h-1.5zM984.30 419.16h1.5v1.5h-1.5zM984.30 439.35h1.5v1.5h-1.5zM984.30 459.54h1.5v1.5h-1.5zM984.30 479.73h1.5v1.5h-1.5zM984.30 499.92h1.5v1.5h-1.5zM984.30 520.11h1.5v1.5h-1.5zM984.30 540.30h1.5v1.5h-1.5zM984.30 560.49h1.5v1.5h-1.5zM984.30 580.68h1.5v1.5h-1.5zM984.30 600.87h1.5v1.5h-1.5zM984.30 621.06h1.5v1.5h-1.5zM984.30 641.25h1.5v1.5h-1.5zM1004.49 35.55h1.5v1.5h-1.5zM1004.49 55.74h1.5v1.5h-1.5zM1004.49 75.93h1.5v1.5h-1.5zM1004.49 96.12h1.5v1.5h-1.5zM1004.49 116.31h1.5v1.5h-1.5zM1004.49 136.50h1.5v1.5h-1.5zM1004.49 156.69h1.5v1.5h-1.5zM1004.49 176.88h1.5v1.5h-1.5zM1004.49 197.07h1.5v1.5h-1.5zM1004.49 217.26h1.5v1.5h-1.5zM1004.49 237.45h1.5v1.5h-1.5zM1004.49 257.64h1.5v1.5h-1.5zM1004.49 277.83h1.5v1.5h-1.5zM1004.49 298.02h1.5v1.5h-1.5zM1004.49 318.21h1.5v1.5h-1.5zM1004.49 338.40h1.5v1.5h-1.5zM1004.49 358.59h1.5v1.5h-1.5zM1004.49 378.78h1.5v1.5h-1.5zM1004.49 398.97h1.5v1.5h-1.5zM1004.49 419.16h1.5v1.5h-1.5zM1004.49 439.35h1.5v1.5h-1.5zM1004.49 459.54h1.5v1.5h-1.5zM1004.49 479.73h1.5v1.5h-1.5zM1004.49 499.92h1.5v1.5h-1.5zM1004.49 520.11h1.5v1.5h-1.5zM1004.49 540.30h1.5v1.5h-1.5zM1004.49 560.49h1.5v1.5h-1.5zM1004.49 580.68h1.5v1.5h-1.5zM1004.49 600.87h1.5v1.5h-1.5zM1004.49 621.06h1.5v1.5h-1.5zM1004.49 641.25h1.5v1.5h-1.5z" fill="#505050"/>
<line x1="409.5" y1="197.85" x2="481" y2="197.85" stroke="#006400" stroke-width="6"/>
<line x1="409.5" y1="298.8" x2="481" y2="298.8" stroke="#006400" stroke-width="6"/>
<path d="M340.3 179H390.3L409.1 197.85L390.3 215.9H340.3Z" fill="none" stroke="#000" stroke-width="4" stroke-linejoin="miter"/>
<ellipse cx="370" cy="195.65" rx="9" ry="14" fill="#006400"/>
<rect x="365.35" y="187.55" width="8.50" height="15.40" rx="4.25" ry="5.27" fill="none" stroke="#fff" stroke-width="2.7"/><line x1="367.30" y1="201.30" x2="372.30" y2="188.80" stroke="#fff" stroke-width="2.0"/>
<text x="380.6" y="211.6" font-family="Liberation Sans" font-size="17.5" fill="#0000ff">b</text>
<text x="334" y="213.8" text-anchor="end" font-family="Liberation Sans" font-weight="bold" font-size="32.5" fill="#0000ff">A</text>
<path d="M482 183.6L519.5 197.8L482 212Z" fill="none" stroke="#000" stroke-width="4" stroke-linejoin="miter"/>
<circle cx="531.5" cy="198.4" r="9.25" fill="none" stroke="#000" stroke-width="3.5"/>
<path d="M340.3 279.95H390.3L409.1 298.8L390.3 316.85H340.3Z" fill="none" stroke="#000" stroke-width="4" stroke-linejoin="miter"/>
<ellipse cx="370" cy="296.6" rx="9" ry="14" fill="#006400"/>
<rect x="365.35" y="288.50" width="8.50" height="15.40" rx="4.25" ry="5.27" fill="none" stroke="#fff" stroke-width="2.7"/><line x1="367.30" y1="302.25" x2="372.30" y2="289.75" stroke="#fff" stroke-width="2.0"/>
<text x="380.6" y="312.55" font-family="Liberation Sans" font-size="17.5" fill="#0000ff">b</text>
<text x="0" y="0" transform="translate(334.2 314.75) scale(0.86 1)" text-anchor="end" font-family="Liberation Sans" font-weight="bold" font-size="32.5" fill="#0000ff">B</text>
<path d="M482 284.55L519.5 298.75L482 312.95Z" fill="none" stroke="#000" stroke-width="4" stroke-linejoin="miter"/>
<circle cx="531.5" cy="299.35" r="9.25" fill="none" stroke="#000" stroke-width="3.5"/>
<path d="M623.2 187.7H671.5A50.4 50.4 0 0 1 671.5 288.5H623.2Z" fill="none" stroke="#000" stroke-width="4" stroke-linejoin="miter"/>
<circle cx="733.2" cy="239" r="9.1" fill="none" stroke="#000" stroke-width="3.6"/>
<path d="M815.3 220H864.4L883.2 238.2L864.4 256H815.3Z" fill="none" stroke="#000" stroke-width="4" stroke-linejoin="miter"/>
<rect x="840.20" y="227.00" width="9.20" height="15.60" rx="4.60" ry="5.70" fill="none" stroke="#000" stroke-width="2.4"/><line x1="842.40" y1="240.20" x2="847.50" y2="228.60" stroke="#000" stroke-width="1.9"/>
<text x="855.2" y="251.6" font-family="Liberation Sans" font-size="16.8" fill="#0000ff">b</text>
<text x="887.6" y="252.6" font-family="Liberation Serif" font-weight="bold" font-size="33.5" fill="#0000ff">Q</text>
<rect x="797" y="211.7" width="14.3" height="14.1" fill="#fff" stroke="#000" stroke-width="1.8"/>
<rect x="797" y="256.7" width="14.3" height="14.1" fill="#fff" stroke="#000" stroke-width="1.8"/>
<rect x="908.4" y="212.2" width="14.3" height="14.1" fill="#fff" stroke="#000" stroke-width="1.8"/>
<rect x="908.4" y="256.9" width="14.3" height="14.1" fill="#fff" stroke="#000" stroke-width="1.8"/>
<circle cx="419.3" cy="197.85" r="4.2" fill="#006400"/>
<circle cx="480.3" cy="197.85" r="4" fill="#006400"/>
<circle cx="419.3" cy="298.8" r="4.2" fill="#006400"/>
<circle cx="480.3" cy="298.8" r="4" fill="#006400"/>
<line x1="540.7" y1="197.85" x2="622" y2="197.85" stroke="#00d200" stroke-width="6.1"/>
<circle cx="540.6" cy="197.85" r="4.2" fill="#00d200"/>
<circle cx="621.5" cy="197.85" r="4" fill="#00d200"/>
<path d="M540.7 298.65H581V278.75H622" fill="none" stroke="#00d200" stroke-width="6.1" stroke-linejoin="miter"/>
<circle cx="540.6" cy="298.65" r="4.2" fill="#00d200"/>
<circle cx="621.5" cy="278.75" r="4" fill="#00d200"/>
<line x1="742" y1="238" x2="813.5" y2="238" stroke="#006400" stroke-width="6"/>
<circle cx="742.6" cy="238" r="3.8" fill="#006400"/>
<circle cx="802.9" cy="238.1" r="4.1" fill="#006400"/>
</g>
</svg>
<div class="r" style="left:257px;top:19px;width:767px;height:16px;background:#f1f1f1"></div>
<div class="r" style="left:256.9px;top:34.3px;width:767.1px;height:1.9px;background:#82b2e5"></div>
<div class="r" style="left:256.9px;top:34.3px;width:1.6px;height:627.7px;background:#82b2e5"></div>
<div class="r" style="left:257px;top:660.8px;width:767px;height:1.2px;background:#7fb0e4"></div>
<div class="r" style="left:1018.5px;top:36.2px;width:5.5px;height:624.6px;background:#f3f3f3"></div>
<div class="r" style="left:1019.7px;top:37.5px;width:3.6px;height:157px;background:#c4c4c4;border-radius:2px"></div>
<div class="r" style="left:258.3px;top:656px;width:761px;height:4.6px;background:#f3f3f3"></div>
<div class="r" style="left:307.8px;top:657px;width:165px;height:2.8px;background:#c4c4c4;border-radius:2px"></div>
<div class="r" style="left:0;top:19px;width:257px;height:643px;background:#f1f1f1"></div>
<div class="t" style="left:7.40px;top:25.23px;font-size:10px;line-height:10px;font-weight:bold;color:#000;letter-spacing:-0.1px">Design</div>
<div class="t" style="left:53.70px;top:25.23px;font-size:10px;line-height:10px;font-weight:bold;color:#000;letter-spacing:-0.1px">Simulate</div>
<div class="r" style="left:0;top:37.2px;width:47px;height:1.6px;background:#7fb0e4"></div>
<div class="r" style="left:1px;top:53.5px;width:254px;height:286px;background:#fff;border-top:1px solid #d0d0d0;border-bottom:1px solid #d0d0d0;border-left:1px solid #d8d8d8"></div>
<div class="r" style="left:1.4px;top:211px;width:247.6px;height:14.5px;background:#d6d6d6"></div>
<div class="r" style="left:249px;top:55px;width:5.5px;height:284px;background:#f6f6f6"></div>
<div class="r" style="left:250.2px;top:62.2px;width:3.4px;height:197px;background:#c6c6c6;border-radius:2px"></div>
<div class="t" style="left:29.80px;top:61.88px;font-size:9px;line-height:9px;font-weight:bold;color:#000;">main</div>
<div class="t" style="left:29.80px;top:76.08px;font-size:9px;line-height:9px;font-weight:bold;color:#000;">NAND_Gate</div>
<div class="t" style="left:29.80px;top:89.98px;font-size:9px;line-height:9px;font-weight:bold;color:#000;">NOT_Gate</div>
<div class="t" style="left:29.80px;top:104.18px;font-size:9px;line-height:9px;font-weight:bold;color:#000;">AND_Gate</div>
<div class="t" style="left:29.80px;top:118.48px;font-size:9px;line-height:9px;font-weight:bold;color:#000;">OR_Gate</div>
<div class="t" style="left:27.30px;top:131.38px;font-size:9px;line-height:9px;font-weight:bold;color:#000;">Wiring</div>
<div class="t" style="left:27.30px;top:143.78px;font-size:9px;line-height:9px;font-weight:bold;color:#000;">Gates</div>
<div class="t" style="left:40.80px;top:157.78px;font-size:9px;line-height:9px;font-weight:bold;color:#000;">NOT Gate</div>
<div class="t" style="left:40.80px;top:172.06px;font-size:9px;line-height:9px;font-weight:bold;color:#000;">Buffer</div>
<div class="t" style="left:40.80px;top:186.34px;font-size:9px;line-height:9px;font-weight:bold;color:#000;">AND Gate</div>
<div class="t" style="left:40.80px;top:200.62px;font-size:9px;line-height:9px;font-weight:bold;color:#000;">OR Gate</div>
<div class="t" style="left:40.80px;top:214.90px;font-size:9px;line-height:9px;font-weight:bold;color:#000;">NAND Gate</div>
<div class="t" style="left:40.80px;top:229.18px;font-size:9px;line-height:9px;font-weight:bold;color:#000;">NOR Gate</div>
<div class="t" style="left:40.80px;top:243.46px;font-size:9px;line-height:9px;font-weight:bold;color:#000;">XOR Gate</div>
<div class="t" style="left:40.80px;top:257.74px;font-size:9px;line-height:9px;font-weight:bold;color:#000;">XNOR Gate</div>
<div class="t" style="left:40.80px;top:272.02px;font-size:9px;line-height:9px;font-weight:bold;color:#000;">Odd Parity</div>
<div class="t" style="left:40.80px;top:286.30px;font-size:9px;line-height:9px;font-weight:bold;color:#000;">Even Parity</div>
<div class="t" style="left:40.80px;top:300.58px;font-size:9px;line-height:9px;font-weight:bold;color:#000;">Controlled Buffer</div>
<div class="t" style="left:40.80px;top:314.86px;font-size:9px;line-height:9px;font-weight:bold;color:#000;">Controlled Inverter</div>
<div class="t" style="left:40.80px;top:329.14px;font-size:9px;line-height:9px;font-weight:bold;color:#000;">PLA</div>
<div class="t" style="left:7.40px;top:347.24px;font-size:10px;line-height:10px;font-weight:bold;color:#000;letter-spacing:-0.1px">Properties</div>
<div class="t" style="left:69.40px;top:347.24px;font-size:10px;line-height:10px;font-weight:bold;color:#000;letter-spacing:-0.1px">State</div>
<div class="r" style="left:0;top:359.4px;width:62px;height:1.6px;background:#7fb0e4"></div>
<div class="r" style="left:62px;top:360px;width:195px;height:1px;background:#d0d0d0"></div>
<div class="t" style="left:28.50px;width:200px;text-align:center;top:362.58px;font-size:9px;line-height:9px;font-weight:bold;color:#000;">Pin "Q"</div>
<div class="r" style="left:1px;top:373px;width:255px;height:243px;background:#fff;border-top:1px solid #d0d0d0;border-bottom:1px solid #d0d0d0;border-left:1px solid #d8d8d8"></div>
<div class="r" style="left:128.2px;top:374px;width:126.8px;height:13px;background:#00ff00"></div>
<div class="r" style="left:1.3px;top:439.4px;width:253.7px;height:12.8px;background:#2a6fbd"></div>
<div class="t" style="left:1.90px;top:376.81px;font-size:9.2px;line-height:9.2px;font-weight:normal;color:#000;">FPGA supported</div>
<div class="t" style="left:1.90px;top:389.87px;font-size:9.2px;line-height:9.2px;font-weight:normal;color:#000;">Facing</div>
<svg class="cv" style="z-index:3" width="1024" height="662"><path d="M130.4 393.56h6" stroke="#000" stroke-width="1.1"/><path d="M129 393.56l2.6 -1.7v3.4z" fill="#000"/></svg>
<div class="t" style="left:139.40px;top:389.87px;font-size:9.2px;line-height:9.2px;font-weight:normal;color:#000;z-index:4">West</div>
<div class="t" style="left:1.90px;top:402.93px;font-size:9.2px;line-height:9.2px;font-weight:normal;color:#000;">Type</div>
<div class="t" style="left:128.40px;top:402.93px;font-size:9.2px;line-height:9.2px;font-weight:normal;color:#000;">Output</div>
<div class="t" style="left:1.90px;top:415.99px;font-size:9.2px;line-height:9.2px;font-weight:normal;color:#000;">Data Bits</div>
<div class="t" style="left:128.40px;top:415.99px;font-size:9.2px;line-height:9.2px;font-weight:normal;color:#000;">1</div>
<div class="t" style="left:1.90px;top:429.05px;font-size:9.2px;line-height:9.2px;font-weight:normal;color:#000;">Label</div>
<div class="t" style="left:128.40px;top:429.05px;font-size:9.2px;line-height:9.2px;font-weight:normal;color:#000;">Q</div>
<div class="t" style="left:1.90px;top:442.11px;font-size:9.2px;line-height:9.2px;font-weight:normal;color:#fff;">Label Location</div>
<svg class="cv" style="z-index:3" width="1024" height="662"><path d="M130.4 445.8h6" stroke="#fff" stroke-width="1.1"/><path d="M129 445.8l2.6 -1.7v3.4z" fill="#fff"/></svg>
<div class="t" style="left:139.40px;top:442.11px;font-size:9.2px;line-height:9.2px;font-weight:normal;color:#fff;z-index:4">West</div>
<div class="t" style="left:1.90px;top:455.17px;font-size:9.2px;line-height:9.2px;font-weight:normal;color:#000;">Label Font</div>
<div class="t" style="left:128.40px;top:455.17px;font-size:9.2px;line-height:9.2px;font-weight:normal;color:#000;">SansSerif Bold 16</div>
<div class="t" style="left:1.90px;top:468.23px;font-size:9.2px;line-height:9.2px;font-weight:normal;color:#000;">Radix</div>
<div class="t" style="left:128.40px;top:468.23px;font-size:9.2px;line-height:9.2px;font-weight:normal;color:#000;">Binary</div>
<div class="t" style="left:1.90px;top:481.29px;font-size:9.2px;line-height:9.2px;font-weight:normal;color:#000;">Appearance</div>
<div class="t" style="left:128.40px;top:481.29px;font-size:9.2px;line-height:9.2px;font-weight:normal;color:#000;">Arrow shapes</div>
<div class="t" style="left:91.60px;width:200px;text-align:center;top:376.81px;font-size:9.2px;line-height:9.2px;font-weight:normal;color:#000;">Supported</div>
<div class="t" style="left:28.00px;width:200px;text-align:center;top:622.58px;font-size:9px;line-height:9px;font-weight:normal;color:#000;-webkit-text-stroke:0.1px #000">×3.4</div>
<div class="r" style="left:5.7px;top:639.3px;width:120px;height:1.4px;background:#4a90e2"></div>
<div class="r" style="left:125px;top:639.5px;width:125.6px;height:1px;background:#cfcfcf"></div>
<div class="r" style="left:121.2px;top:636.2px;width:7.6px;height:7.6px;border-radius:50%;background:#3d8ae0"></div>
<div class="r" style="left:1.5px;top:647.6px;width:41.9px;height:16px;background:#fff;border:0.6px solid #c8c8c8;border-radius:2px"></div>
<div class="t" style="left:-77.55px;width:200px;text-align:center;top:650.46px;font-size:9.5px;line-height:9.5px;font-weight:normal;color:#000;-webkit-text-stroke:0.1px #000">Auto</div>
<div class="r" style="left:46.3px;top:647.6px;width:61.0px;height:16px;background:#fff;border:0.6px solid #c8c8c8;border-radius:2px"></div>
<div class="t" style="left:-23.20px;width:200px;text-align:center;top:650.46px;font-size:9.5px;line-height:9.5px;font-weight:normal;color:#000;-webkit-text-stroke:0.1px #000">×½</div>
<div class="r" style="left:109.6px;top:647.6px;width:60.4px;height:16px;background:#fff;border:0.6px solid #c8c8c8;border-radius:2px"></div>
<div class="t" style="left:39.80px;width:200px;text-align:center;top:650.46px;font-size:9.5px;line-height:9.5px;font-weight:normal;color:#000;-webkit-text-stroke:0.1px #000">×1</div>
<div class="r" style="left:173.4px;top:647.6px;width:60.6px;height:16px;background:#fff;border:0.6px solid #c8c8c8;border-radius:2px"></div>
<div class="t" style="left:103.70px;width:200px;text-align:center;top:650.46px;font-size:9.5px;line-height:9.5px;font-weight:normal;color:#000;-webkit-text-stroke:0.1px #000">×2</div>
<svg class="cv" width="1024" height="662" viewBox="0 0 1024 662" style="z-index:5">
<rect x="47" y="37.8" width="210" height="1" fill="#d6d6d6"/>
<rect x="0" y="19" width="1024" height="1.4" fill="#fafafa"/>
<path d="M5 41.7h2.6v2.7h2.6v2.6h-2.6v2.7h-2.6v-2.7h-2.8v-2.6h2.8z" fill="#22dd22" stroke="#0a6e0a" stroke-width="1"/>
<g fill="none" stroke="#1a7a1a" stroke-width="1.3"><path d="M14.6 41.2l2.2 4.2M19 41.2l-2.2 4.2M19.6 41v4.2M22.4 41v4.2M19.6 43.1h2.8"/><path d="M14.6 46.4v4h1.6a2 2 0 0 0 2-2v0a2 2 0 0 0-2-2zM19.8 46.3v4h3"/></g>
<path d="M30.5 41.7l3.6 3.8h-2.3v3.4h-2.6v-3.4h-2.3z" fill="#0000ee"/>
<path d="M42.6 47.8l3.4-3.6h-2.2v-3.1h-2.5v3.1h-2.2z" fill="#8c8cff"/>
<rect x="52.3" y="41.6" width="8.2" height="8.6" fill="#fff" stroke="#000" stroke-width="1.4"/>
<path d="M53 49.6L60 42.2" stroke="#d41a0a" stroke-width="1.3"/><rect x="52.2" y="43.5" width="1.1" height="3" fill="#22dd22"/><rect x="59.8" y="43" width="1.1" height="3" fill="#3a7de0"/>
<path d="M65.6 42.6l6 6M71.6 42.6l-6 6" stroke="#c82a10" stroke-width="2.4"/>
<rect x="3.6" y="53.9" width="8.7" height="2.1" fill="#b8b424"/>
<path d="M21.3 53.8h2.2v1.3h-2.2zM25.4 53.8h2v1.3h-2zM32 53.8h2.3v1.3h-2.3zM37 53.8h3.5v1.3h-3.5zM44.8 53.8h2v1.3h-2z" fill="#222"/>
<g><rect x="16.5" y="59.7" width="8" height="10.6" rx="0.4" fill="#fff" stroke="#000" stroke-width="1.6"/><rect x="16.2" y="67.5" width="8.6" height="2.8" fill="#111"/><rect x="17.3" y="68.10000000000001" width="6.4" height="0.7" fill="#888"/><rect x="14.8" y="60.900000000000006" width="1.6" height="0.9" fill="#000"/><rect x="14.8" y="63.400000000000006" width="1.6" height="0.9" fill="#000"/><rect x="14.8" y="66.4" width="1.6" height="0.9" fill="#000"/><rect x="24.6" y="60.900000000000006" width="1.3" height="0.9" fill="#000"/><rect x="24.6" y="63.400000000000006" width="1.3" height="0.9" fill="#000"/></g>
<g><rect x="16.5" y="74.0" width="8" height="10.6" rx="0.4" fill="#fff" stroke="#000" stroke-width="1.6"/><rect x="16.2" y="81.8" width="8.6" height="2.8" fill="#111"/><rect x="17.3" y="82.4" width="6.4" height="0.7" fill="#888"/><rect x="14.8" y="75.2" width="1.6" height="0.9" fill="#000"/><rect x="14.8" y="77.7" width="1.6" height="0.9" fill="#000"/><rect x="14.8" y="80.7" width="1.6" height="0.9" fill="#000"/><rect x="24.6" y="75.2" width="1.3" height="0.9" fill="#000"/><rect x="24.6" y="77.7" width="1.3" height="0.9" fill="#000"/></g>
<g><rect x="16.5" y="88.2" width="8" height="10.6" rx="0.4" fill="#fff" stroke="#000" stroke-width="1.6"/><rect x="16.2" y="96.0" width="8.6" height="2.8" fill="#111"/><rect x="17.3" y="96.60000000000001" width="6.4" height="0.7" fill="#888"/><rect x="14.8" y="89.4" width="1.6" height="0.9" fill="#000"/><rect x="14.8" y="91.9" width="1.6" height="0.9" fill="#000"/><rect x="14.8" y="94.9" width="1.6" height="0.9" fill="#000"/><rect x="24.6" y="89.4" width="1.3" height="0.9" fill="#000"/><rect x="24.6" y="91.9" width="1.3" height="0.9" fill="#000"/></g>
<g><rect x="16.5" y="102.5" width="8" height="10.6" rx="0.4" fill="#fff" stroke="#000" stroke-width="1.6"/><rect x="16.2" y="110.3" width="8.6" height="2.8" fill="#111"/><rect x="17.3" y="110.9" width="6.4" height="0.7" fill="#888"/><rect x="14.8" y="103.7" width="1.6" height="0.9" fill="#000"/><rect x="14.8" y="106.2" width="1.6" height="0.9" fill="#000"/><rect x="14.8" y="109.2" width="1.6" height="0.9" fill="#000"/><rect x="24.6" y="103.7" width="1.3" height="0.9" fill="#000"/><rect x="24.6" y="106.2" width="1.3" height="0.9" fill="#000"/></g>
<g><rect x="16.5" y="116.7" width="8" height="10.6" rx="0.4" fill="#fff" stroke="#000" stroke-width="1.6"/><rect x="16.2" y="124.5" width="8.6" height="2.8" fill="#111"/><rect x="17.3" y="125.10000000000001" width="6.4" height="0.7" fill="#888"/><rect x="14.8" y="117.9" width="1.6" height="0.9" fill="#000"/><rect x="14.8" y="120.4" width="1.6" height="0.9" fill="#000"/><rect x="14.8" y="123.4" width="1.6" height="0.9" fill="#000"/><rect x="24.6" y="117.9" width="1.3" height="0.9" fill="#000"/><rect x="24.6" y="120.4" width="1.3" height="0.9" fill="#000"/><path d="M23.6 125.5L26.8 128.0" stroke="#d0281a" stroke-width="1.2"/></g>
<path d="M4.6 132.9L9.1 135.4L4.6 137.9Z" fill="#a8a8a8"/>
<path d="M4.2 145.8H9.4L6.8 150Z" fill="#a8a8a8"/>
<path d="M14.1 130.8h1.6l0.6 0.8h6.6v8.4h-8.8z" fill="#b8b424"/>
<path d="M14.1 143.3h9.2v9.1h-9.2z" fill="#b8b424"/><rect x="15.3" y="144.3" width="7.4" height="6.2" fill="#fff"/>
<path d="M15.8 145.3h3a2.4 2.4 0 0 1 0 4.8h-3z" fill="none" stroke="#222" stroke-width="0.9"/><path d="M21.2 147.7h1.4" stroke="#222" stroke-width="0.9"/>
<path d="M27.0 158.1L32.2 161.1L27.0 164.1Z" fill="none" stroke="#222" stroke-width="0.95"/><path d="M26.0 161.1h1" fill="none" stroke="#222" stroke-width="0.95"/><circle cx="33.5" cy="161.1" r="1.2" fill="none" stroke="#222" stroke-width="0.95"/><path d="M34.7 161.1h1" fill="none" stroke="#222" stroke-width="0.95"/>
<path d="M27.0 172.38L32.2 175.38L27.0 178.38Z" fill="none" stroke="#222" stroke-width="0.95"/><path d="M26.0 175.38h1" fill="none" stroke="#222" stroke-width="0.95"/><path d="M32.2 175.38h2" fill="none" stroke="#222" stroke-width="0.95"/>
<path d="M27.0 186.66h2.8a3 3 0 0 1 0 6h-2.8z" fill="none" stroke="#222" stroke-width="0.95"/><path d="M32.8 189.66h2" fill="none" stroke="#222" stroke-width="0.95"/>
<path d="M27.0 200.94h2c2 0 3.2 1.6 3.8 3c-0.6 1.4-1.8 3-3.8 3h-2c0.8-1 1.1-2 1.1-3s-0.3-2-1.1-3z" fill="none" stroke="#222" stroke-width="0.95"/><path d="M26.0 202.44h2M26.0 205.44h2" fill="none" stroke="#222" stroke-width="0.95"/><path d="M32.8 203.94h2" fill="none" stroke="#222" stroke-width="0.95"/>
<path d="M27.0 215.22h2.8a3 3 0 0 1 0 6h-2.8z" fill="none" stroke="#222" stroke-width="0.95"/><circle cx="34.099999999999994" cy="218.22" r="1.2" fill="none" stroke="#222" stroke-width="0.95"/><path d="M35.3 218.22h1" fill="none" stroke="#222" stroke-width="0.95"/>
<path d="M27.0 229.5h2c2 0 3.2 1.6 3.8 3c-0.6 1.4-1.8 3-3.8 3h-2c0.8-1 1.1-2 1.1-3s-0.3-2-1.1-3z" fill="none" stroke="#222" stroke-width="0.95"/><path d="M26.0 231.0h2M26.0 234.0h2" fill="none" stroke="#222" stroke-width="0.95"/><circle cx="34.099999999999994" cy="232.5" r="1.2" fill="none" stroke="#222" stroke-width="0.95"/><path d="M35.3 232.5h1" fill="none" stroke="#222" stroke-width="0.95"/>
<path d="M27.0 243.77999999999997h2c2 0 3.2 1.6 3.8 3c-0.6 1.4-1.8 3-3.8 3h-2c0.8-1 1.1-2 1.1-3s-0.3-2-1.1-3z" fill="none" stroke="#222" stroke-width="0.95"/><path d="M25.8 243.77999999999997c0.8 1 1.1 2 1.1 3s-0.3 2-1.1 3" fill="none" stroke="#222" stroke-width="0.95"/><path d="M26.0 245.27999999999997h2M26.0 248.27999999999997h2" fill="none" stroke="#222" stroke-width="0.95"/><path d="M32.8 246.77999999999997h2" fill="none" stroke="#222" stroke-width="0.95"/>
<path d="M27.0 258.06h2c2 0 3.2 1.6 3.8 3c-0.6 1.4-1.8 3-3.8 3h-2c0.8-1 1.1-2 1.1-3s-0.3-2-1.1-3z" fill="none" stroke="#222" stroke-width="0.95"/><path d="M25.8 258.06c0.8 1 1.1 2 1.1 3s-0.3 2-1.1 3" fill="none" stroke="#222" stroke-width="0.95"/><path d="M26.0 259.56h2M26.0 262.56h2" fill="none" stroke="#222" stroke-width="0.95"/><circle cx="34.099999999999994" cy="261.06" r="1.2" fill="none" stroke="#222" stroke-width="0.95"/><path d="M35.3 261.06h1" fill="none" stroke="#222" stroke-width="0.95"/>
<rect x="27.5" y="271.34" width="5.6" height="8" fill="none" stroke="#222" stroke-width="0.95"/><path d="M28.5 273.34h3.6M28.5 276.34h3.6" fill="none" stroke="#222" stroke-width="0.95"/>
<rect x="27.5" y="285.62" width="5.6" height="8" fill="none" stroke="#222" stroke-width="0.95"/><path d="M27.5 289.62h5.6" fill="none" stroke="#222" stroke-width="0.95"/>
<path d="M27.0 300.9L32.2 303.9L27.0 306.9Z" fill="none" stroke="#222" stroke-width="0.95"/><path d="M26.0 303.9h1" fill="none" stroke="#222" stroke-width="0.95"/><path d="M29.6 305.5v2.4" fill="none" stroke="#222" stroke-width="0.95"/><path d="M32.2 303.9h2" fill="none" stroke="#222" stroke-width="0.95"/>
<path d="M27.0 315.17999999999995L32.2 318.17999999999995L27.0 321.17999999999995Z" fill="none" stroke="#222" stroke-width="0.95"/><path d="M26.0 318.17999999999995h1" fill="none" stroke="#222" stroke-width="0.95"/><path d="M29.6 319.78v2.4" fill="none" stroke="#222" stroke-width="0.95"/><circle cx="33.5" cy="318.17999999999995" r="1.2" fill="none" stroke="#222" stroke-width="0.95"/><path d="M34.7 318.17999999999995h1" fill="none" stroke="#222" stroke-width="0.95"/>
<rect x="27.8" y="328.46" width="7.4" height="8.4" fill="#ddd" stroke="#333" stroke-width="0.9"/><path d="M29.3 330.26h4.4M29.3 332.26h4.4M29.3 334.26h4.4" stroke="#555" stroke-width="0.8"/>
<circle cx="6.6" cy="625.4" r="3.4" fill="#ddd" stroke="#555" stroke-width="1.2"/><path d="M5 625.4h3.2" stroke="#333" stroke-width="0.9"/><path d="M9.2 628.2l2.4 2.2" stroke="#c03020" stroke-width="1.2"/>
<circle cx="248" cy="625.4" r="3.4" fill="#ddd" stroke="#555" stroke-width="1.2"/><path d="M246.4 625.4h3.2M248 623.8v3.2" stroke="#333" stroke-width="0.9"/><path d="M250.6 628.2l2.4 2.2" stroke="#c03020" stroke-width="1.2"/>
<path d="M237 649.6v-2h2.2M253.3 647.6h2.2v2M237 660.3v1.7M255.5 660.3v1.7" fill="none" stroke="#333" stroke-width="1.2"/>
<path d="M262.4 31.6l-0.8-2.8-1.9-2c-0.4-0.5 0-1.2 0.7-1l1.6 0.8v-0.3M263.5 26.4v-4.6c0-0.6 1-0.6 1 0v4.3M264.5 26l0.2-0.2c0.4-0.4 1.2-0.3 1.3 0.3M266 26.2c0.4-0.4 1.1-0.3 1.2 0.2M267.2 26.5c0.4-0.3 1.2-0.1 1.2 0.4l-0.5 2.4-0.6 2.3" fill="none" stroke="#222" stroke-width="1.1"/>
<path d="M262.6 31.5l-0.6-2.6 1.4-2.4 4.6 0.2-0.6 4.8z" fill="#9a9a9a" opacity="0.6"/>
<rect x="272.8" y="20.9" width="12.2" height="12" rx="1.8" fill="#f6f6f6" stroke="#111" stroke-width="1.5"/>
<rect x="274.4" y="22.4" width="0.8" height="9.4" fill="#cfcfcf"/>
<path d="M276 23.1V30.8L278.2 28.9L280.1 31.7L281.6 30.9L279.8 28.4L282.6 28.3Z" fill="#000"/>
<path d="M291 30.4L293.2 29.4V23.5H297.4" fill="none" stroke="#000" stroke-width="1.2"/><circle cx="290.8" cy="30.6" r="1.5" fill="#1ed21e"/><circle cx="297.6" cy="23.8" r="1.5" fill="#1e1eff"/>
<text x="304.5" y="29.9" font-family="Liberation Sans" font-weight="bold" font-size="10.6" textLength="7.2" lengthAdjust="spacingAndGlyphs" fill="#000">A</text>
<rect x="318.4" y="21" width="1.3" height="12.6" fill="#9a9a9a"/>
<rect x="352.9" y="21" width="1.3" height="12.6" fill="#9a9a9a"/>
<rect x="447" y="21" width="1.3" height="12.6" fill="#9a9a9a"/>
<path d="M323.2 23.4h4.8l2.6 3.1-2.6 3.1h-4.8z" fill="#fff" stroke="#333" stroke-width="0.9"/><path d="M330.6 26.5h3.3" stroke="#22cc22" stroke-width="1"/>
<path d="M340.6 23.4h4.8l2.6 3.1-2.6 3.1h-4.8z" fill="#fff" stroke="#333" stroke-width="0.9"/><path d="M337.3 26.5h3.3" stroke="#22cc22" stroke-width="1"/>
<path d="M357.8 23.3L364.0 26.5L357.8 29.7Z" fill="none" stroke="#222" stroke-width="0.95"/><circle cx="365.40000000000003" cy="26.5" r="1.3" fill="none" stroke="#222" stroke-width="0.95"/><path d="M366.7 26.5h1.2" fill="none" stroke="#222" stroke-width="0.95"/>
<path d="M373 23.2h3.6a3.3 3.3 0 0 1 0 6.6h-3.6z" fill="none" stroke="#222" stroke-width="0.95"/><path d="M379.9 26.5h1.6" fill="none" stroke="#222" stroke-width="0.95"/><path d="M372 24.9h1M372 28.1h1" fill="none" stroke="#222" stroke-width="0.95"/>
<path d="M387.6 23.2h2.4c2.2 0 3.6 1.8 4.3 3.3c-0.7 1.5-2.1 3.3-4.3 3.3h-2.4c0.9-1 1.2-2.2 1.2-3.3s-0.3-2.3-1.2-3.3z" fill="none" stroke="#222" stroke-width="0.95"/><path d="M394.3 26.5h1.6" fill="none" stroke="#222" stroke-width="0.95"/><path d="M386.6 24.9h2.2M386.6 28.1h2.2" fill="none" stroke="#222" stroke-width="0.95"/>
<path d="M402.6 23.2h2.4c2.2 0 3.6 1.8 4.3 3.3c-0.7 1.5-2.1 3.3-4.3 3.3h-2.4c0.9-1 1.2-2.2 1.2-3.3s-0.3-2.3-1.2-3.3z" fill="none" stroke="#222" stroke-width="0.95"/><path d="M401.20000000000005 23.2c0.9 1 1.2 2.2 1.2 3.3s-0.3 2.3-1.2 3.3" fill="none" stroke="#222" stroke-width="0.95"/><path d="M409.3 26.5h1.6" fill="none" stroke="#222" stroke-width="0.95"/><path d="M401.6 24.9h2.2M401.6 28.1h2.2" fill="none" stroke="#222" stroke-width="0.95"/>
<path d="M417 23.2h3.6a3.3 3.3 0 0 1 0 6.6h-3.6z" fill="none" stroke="#222" stroke-width="0.95"/><circle cx="425.3" cy="26.5" r="1.3" fill="none" stroke="#222" stroke-width="0.95"/><path d="M426.6 26.5h1" fill="none" stroke="#222" stroke-width="0.95"/><path d="M416 24.9h1M416 28.1h1" fill="none" stroke="#222" stroke-width="0.95"/>
<path d="M431.4 23.2h2.4c2.2 0 3.6 1.8 4.3 3.3c-0.7 1.5-2.1 3.3-4.3 3.3h-2.4c0.9-1 1.2-2.2 1.2-3.3s-0.3-2.3-1.2-3.3z" fill="none" stroke="#222" stroke-width="0.95"/><circle cx="439.5" cy="26.5" r="1.3" fill="none" stroke="#222" stroke-width="0.95"/><path d="M440.79999999999995 26.5h1" fill="none" stroke="#222" stroke-width="0.95"/><path d="M430.4 24.9h2.2M430.4 28.1h2.2" fill="none" stroke="#222" stroke-width="0.95"/>
<path d="M455 23.4h5.4v9.6h-5.4z" fill="#e8e8e8" stroke="#444" stroke-width="1.1"/><path d="M452.4 25.4h2.6M460.4 25.4h2.4M452.4 30.6h2.6" stroke="#111" stroke-width="1.1"/><circle cx="461.8" cy="31" r="1" fill="#fff" stroke="#333" stroke-width="0.8"/>
<path d="M469.4 25.2l1.8-2h5v8.2l-1.8 2h-5z" fill="#e8e8e8" stroke="#444" stroke-width="1.1"/><path d="M469.4 25.2h5v8.2M474.4 25.2l1.8-2" fill="none" stroke="#444" stroke-width="0.9"/><path d="M467.3 26.4h2.2M474.4 26.4h3.2M467.3 30.8h2.2" stroke="#111" stroke-width="1.1"/>
</svg>
<div class="r" style="left:0;top:0;width:1024px;height:19px;background:#000"></div>
</body></html>
